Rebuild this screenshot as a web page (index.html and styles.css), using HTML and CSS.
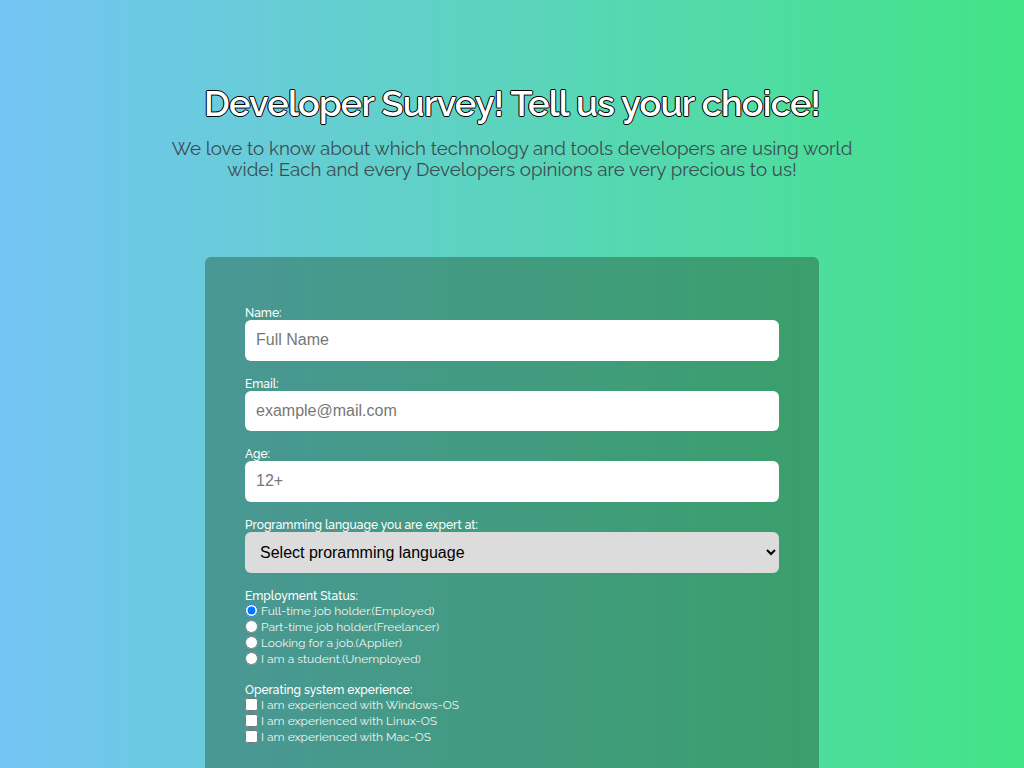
FILE: index.html
```html
<!DOCTYPE html>
<html lang="en">
<head>
<meta charset="utf-8">
<title>Developer Survey</title>
<link rel="stylesheet" href="styles.css">
</head>
<body>
<header class="header">
  <h1 class="title">Developer Survey! Tell us your choice!</h1>
  <p class="description">We love to know about which technology and tools developers are using world wide! Each and every Developers opinions are very precious to us!</p>
</header>
<main class="card">
  <form class="survey">
    <div class="group">
      <label class="label" for="name">Name:</label>
      <input class="field" id="name" type="text" placeholder="Full Name">
    </div>
    <div class="group">
      <label class="label" for="email">Email:</label>
      <input class="field" id="email" type="email" placeholder="example@mail.com">
    </div>
    <div class="group">
      <label class="label" for="age">Age:</label>
      <input class="field" id="age" type="number" placeholder="12+">
    </div>
    <div class="group">
      <label class="label" for="lang">Programming language you are expert at:</label>
      <select class="select" id="lang">
        <option>Select proramming language</option>
        <option>JavaScript</option>
        <option>Python</option>
      </select>
    </div>
    <div class="group">
      <p class="label">Employment Status:</p>
      <label class="option"><input type="radio" name="emp" checked> Full-time job holder.(Employed)</label>
      <label class="option"><input type="radio" name="emp"> Part-time job holder.(Freelancer)</label>
      <label class="option"><input type="radio" name="emp"> Looking for a job.(Applier)</label>
      <label class="option"><input type="radio" name="emp"> I am a student.(Unemployed)</label>
    </div>
    <div class="group">
      <p class="label">Operating system experience:</p>
      <label class="option"><input type="checkbox"> I am experienced with Windows-OS</label>
      <label class="option"><input type="checkbox"> I am experienced with Linux-OS</label>
      <label class="option"><input type="checkbox"> I am experienced with Mac-OS</label>
    </div>
    <div class="group spaced">
      <label class="label" for="comments">Any comments or suggestions?</label>
      <textarea class="field area" id="comments" placeholder="Enter your comment here..."></textarea>
    </div>
    <button class="submit" type="submit">Submit</button>
  </form>
</main>
</body>
</html>
```
FILE: styles.css
```css
* {
  margin: 0;
  padding: 0;
  box-sizing: border-box;
}

body {
  font-family: "Raleway", "Lato", "Open Sans", sans-serif;
  background: linear-gradient(to right, #74c4f4, #42e486);
  background-attachment: fixed;
  min-height: 100vh;
  display: flex;
  flex-direction: column;
  align-items: center;
  padding-bottom: 60px;
}

.header {
  display: flex;
  flex-direction: column;
  align-items: center;
  text-align: center;
  padding-top: 80px;
  margin-bottom: 77px;
}

.title {
  font-size: 36px;
  font-weight: 600;
  color: #fff;
  line-height: 46px;
  letter-spacing: -0.75px;
  -webkit-text-stroke: 1px #000;
  paint-order: stroke fill;
  text-shadow: 1px 0 0 #000, -1px 0 0 #000, 0 1px 0 #000, 0 -1px 0 #000;
}

.description {
  width: 692px;
  margin-top: 12px;
  font-size: 18.72px;
  line-height: 21px;
  color: #3b4d52;
}

.card {
  width: 614px;
  border-radius: 6px;
  background: linear-gradient(to right, #4a9795, #3a9f6b);
  padding: 49px 40px 40px;
}

.survey {
  display: flex;
  flex-direction: column;
  gap: 16px;
}

.group {
  display: flex;
  flex-direction: column;
}

.label {
  font-size: 12px;
  line-height: 14px;
  color: #fff;
  font-weight: 500;
}

.field {
  height: 40.5px;
  border: none;
  border-radius: 6px;
  background: #fff;
  padding: 0 11px;
  font-family: "Liberation Sans", Arial, sans-serif;
  font-size: 16px;
  color: #222;
}

.field::placeholder {
  color: #777;
}

.select {
  height: 41px;
  border: none;
  border-radius: 6px;
  background: #dcdcdc;
  padding: 0 11px;
  font-family: "Liberation Sans", Arial, sans-serif;
  font-size: 16px;
  color: #000;
}

.option {
  display: flex;
  align-items: center;
  gap: 3px;
  height: 16px;
  font-size: 12px;
  color: #eef5f2;
}

.option input {
  width: 13px;
  height: 13px;
  margin: 0;
}

.spaced {
  margin-top: 48px;
}

.area {
  height: 100px;
  padding: 10px 11px;
  resize: none;
}

.submit {
  height: 40px;
  border: none;
  border-radius: 6px;
  background: #2c7a55;
  color: #fff;
  font-size: 16px;
}
```
